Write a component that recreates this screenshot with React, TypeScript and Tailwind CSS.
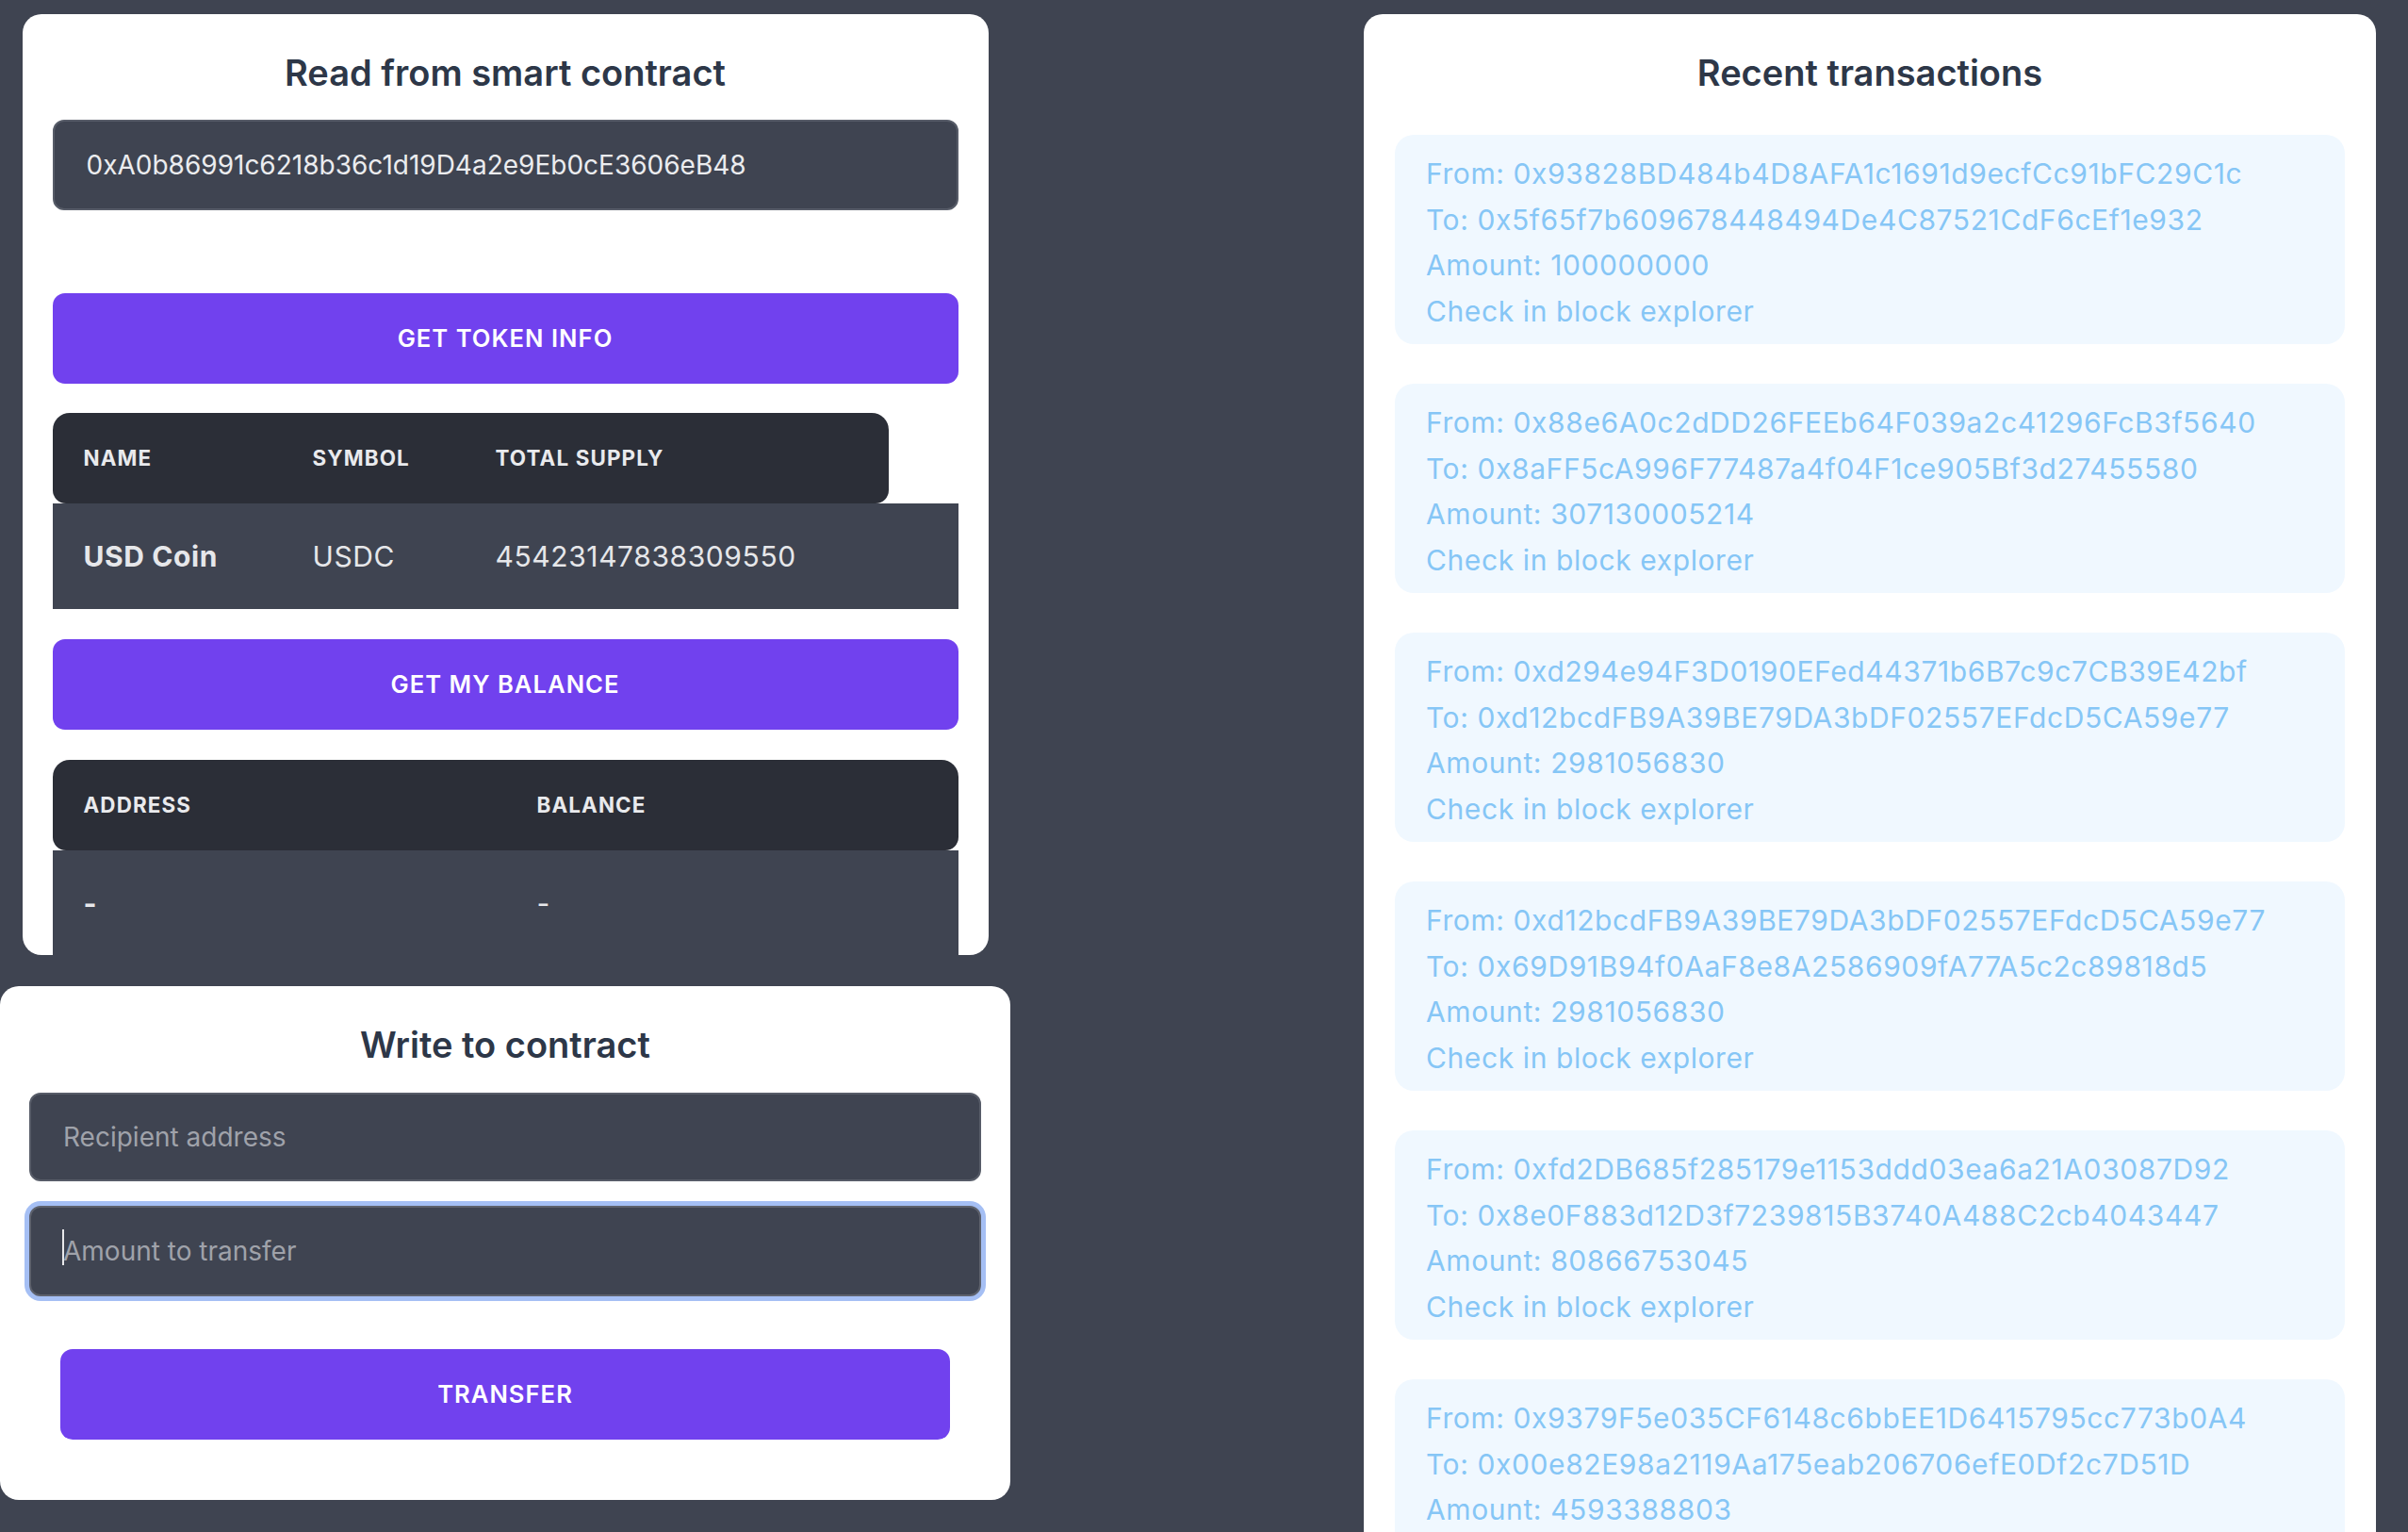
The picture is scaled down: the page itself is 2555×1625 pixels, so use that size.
import React from "react";

const txs = [
  {
    from: "0x93828BD484b4D8AFA1c1691d9ecfCc91bFC29C1c",
    to: "0x5f65f7b609678448494De4C87521CdF6cEf1e932",
    amount: "100000000",
  },
  {
    from: "0x88e6A0c2dDD26FEEb64F039a2c41296FcB3f5640",
    to: "0x8aFF5cA996F77487a4f04F1ce905Bf3d27455580",
    amount: "307130005214",
  },
  {
    from: "0xd294e94F3D0190EFed44371b6B7c9c7CB39E42bf",
    to: "0xd12bcdFB9A39BE79DA3bDF02557EFdcD5CA59e77",
    amount: "2981056830",
  },
  {
    from: "0xd12bcdFB9A39BE79DA3bDF02557EFdcD5CA59e77",
    to: "0x69D91B94f0AaF8e8A2586909fA77A5c2c89818d5",
    amount: "2981056830",
  },
  {
    from: "0xfd2DB685f285179e1153ddd03ea6a21A03087D92",
    to: "0x8e0F883d12D3f7239815B3740A488C2cb4043447",
    amount: "80866753045",
  },
  {
    from: "0x9379F5e035CF6148c6bbEE1D6415795cc773b0A4",
    to: "0x00e82E98a2119Aa175eab206706efE0Df2c7D51D",
    amount: "4593388803",
  },
];

function Button({ label, className = "" }: { label: string; className?: string }) {
  return (
    <button
      className={
        "h-[96px] shrink-0 rounded-[13px] bg-[#7141ee] text-white text-[25.6px] font-semibold tracking-[0.04em] uppercase flex items-center justify-center " +
        className
      }
    >
      {label}
    </button>
  );
}

export default function App() {
  return (
    <div className="h-screen overflow-hidden bg-[#3f4451] font-['Inter','Noto_Sans',sans-serif]">
      <div className="flex gap-[375px]">
        {/* Left column */}
        <div className="w-[1072px] shrink-0 flex flex-col">
          {/* Read card */}
          <div className="mx-auto mt-[15px] w-[1025px] h-[998px] shrink-0 overflow-hidden rounded-[20px] bg-white px-[32px] pt-[39px]">
            <h2 className="h-[46px] leading-[46px] text-center text-[38px] font-semibold text-[#2d3748]">
              Read from smart contract
            </h2>
            <div className="mt-[27px] h-[96px] rounded-[12px] border-2 border-[#575c68] bg-[#3f4451] flex items-center px-[34px] text-[28px] text-[#ebecef]">
              0xA0b86991c6218b36c1d19D4a2e9Eb0cE3606eB48
            </div>
            <Button label="Get token info" className="mt-[88px] w-full" />
            {/* token table */}
            <div className="mt-[31px]">
              <div className="w-[887px] h-[96px] rounded-[18px] rounded-b-[14px] bg-[#2b2e37] flex items-center text-[22.4px] font-bold tracking-[0.05em] text-[#e9eaed]">
                <div className="w-[243px] pl-[33px]">NAME</div>
                <div className="w-[194px] pl-[33px]">SYMBOL</div>
                <div className="flex-1 pl-[33px]">TOTAL SUPPLY</div>
              </div>
              <div className="h-[112px] bg-[#3f4451] flex items-center text-[30px] tracking-[0.02em] text-[#e6e7ea]">
                <div className="w-[243px] pl-[33px] font-bold">USD Coin</div>
                <div className="w-[194px] pl-[33px]">USDC</div>
                <div className="flex-1 pl-[33px]">45423147838309550</div>
              </div>
            </div>
            <Button label="Get my balance" className="mt-[32px] w-full" />
            <div className="mt-[32px]">
              <div className="h-[96px] rounded-[18px] rounded-b-[14px] bg-[#2b2e37] flex items-center text-[22.4px] font-bold tracking-[0.05em] text-[#e9eaed]">
                <div className="w-[481px] pl-[33px]">ADDRESS</div>
                <div className="flex-1 pl-[33px]">BALANCE</div>
              </div>
              <div className="h-[112px] bg-[#3f4451] flex items-center text-[30px] text-[#e6e7ea]">
                <div className="w-[481px] pl-[33px] font-bold">-</div>
                <div className="flex-1 pl-[33px]">-</div>
              </div>
            </div>
          </div>

          {/* Write card */}
          <div className="mt-[33px] w-[1072px] shrink-0 rounded-[20px] bg-white px-[31px] pt-[39px] pb-[64px] flex flex-col">
            <h2 className="h-[46px] leading-[46px] text-center text-[38px] font-semibold text-[#2d3748]">
              Write to contract
            </h2>
            <div className="mt-[28px] h-[94px] shrink-0 rounded-[12px] border-2 border-[#575c68] bg-[#3f4451] flex items-center px-[34px] text-[28px] text-[#9fa2aa]">
              Recipient address
            </div>
            <div className="mt-[26px] h-[96px] shrink-0 rounded-[12px] border-2 border-[#5d616c] bg-[#3f4451] shadow-[0_0_0_5px_#a5bff4] flex items-center px-[34px] text-[28px] text-[#9fa2aa]">
              <span className="relative">
                <span className="absolute left-[-1px] top-[-2px] h-[38px] w-[2px] bg-[#e8e8ea]" />
                Amount to transfer
              </span>
            </div>
            <Button label="Transfer" className="mt-[56px] mx-[33px]" />
          </div>
        </div>

        {/* Right column */}
        <div className="mt-[15px] w-[1074px] shrink-0 rounded-t-[20px] bg-white px-[33px] pt-[39px]">
          <h2 className="h-[46px] leading-[46px] text-center text-[38px] font-semibold text-[#2d3748]">
            Recent transactions
          </h2>
          <div className="mt-[43px] flex flex-col gap-[42px]">
            {txs.map((t, i) => (
              <div
                key={i}
                className="h-[222px] shrink-0 rounded-[20px] bg-[#f0f8ff] px-[33px] pt-[17px] pb-[11px] text-[30px] tracking-[0.02em] leading-[48.5px] text-[#86c6f6]"
              >
                <p>From: {t.from}</p>
                <p>To: {t.to}</p>
                <p>Amount: {t.amount}</p>
                <p>Check in block explorer</p>
              </div>
            ))}
          </div>
        </div>
      </div>
    </div>
  );
}
